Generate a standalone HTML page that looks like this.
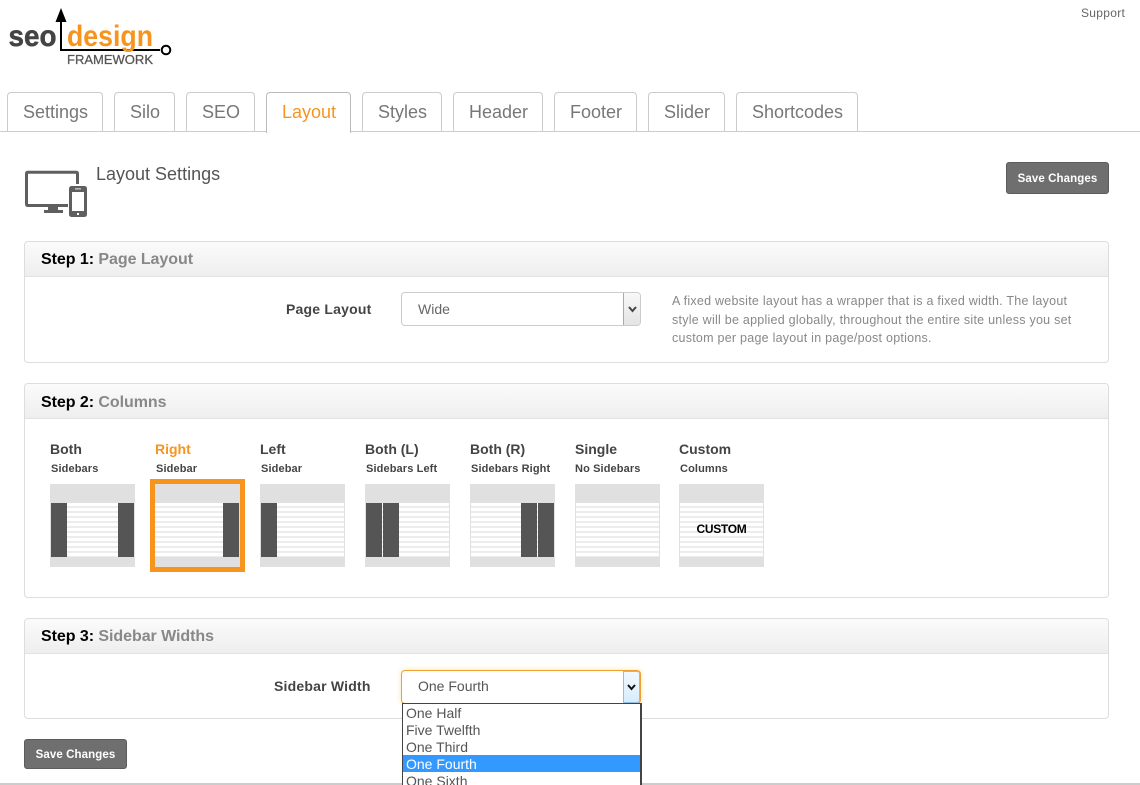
<!DOCTYPE html>
<html><head><meta charset="utf-8"><style>
html,body{margin:0;padding:0;background:#fff;width:1140px;height:785px;overflow:hidden}
body{position:relative;font-family:"Liberation Sans",sans-serif;color:#555}
.a{position:absolute;white-space:nowrap}
.tab{position:absolute;top:92px;height:38px;border:1px solid #ccc;border-bottom:none;border-radius:4px 4px 0 0;box-sizing:content-box;font-size:18px;line-height:39px;text-align:center;text-indent:1px;color:#777;background:#fff}
.tab.on{color:#f7941d;height:40px;z-index:2;border-color:#bbb}
.panel{position:absolute;left:24px;width:1083px;border:1px solid #ddd;border-radius:4px;background:#fff}
.head{height:34px;background:linear-gradient(#fbfbfb,#eee);border-bottom:1px solid #e2e2e2;border-radius:4px 4px 0 0;font-size:16px;font-weight:bold;line-height:35px;padding-left:16px;color:#888;letter-spacing:-.05px}
.head b{color:#000}
.lbl{position:absolute;font-size:14px;font-weight:bold;color:#444;letter-spacing:.2px;white-space:nowrap}
.sel{position:absolute;left:401px;width:238px;height:32px;border:1px solid #ccc;border-radius:4px;background:#fff;font-size:14px;line-height:32px;color:#666;text-indent:16px}
.sel i{position:absolute;right:0;top:0;width:16px;height:32px;background:linear-gradient(#f8f8f8,#e4e4e4);border-left:1px solid #aaa;border-radius:0 3px 3px 0}
.sel svg{position:absolute;left:4px;top:13px}
.btn{position:absolute;background:#6f6f6f;border:1px solid #5c5c5c;border-radius:3px;color:#fff;font-size:11.5px;font-weight:bold;text-align:center;box-sizing:border-box;letter-spacing:.1px}
.t1{position:absolute;top:441px;font-size:14px;font-weight:bold;color:#444;white-space:nowrap}
.t2{position:absolute;top:463px;font-size:11px;font-weight:bold;color:#444;white-space:nowrap;letter-spacing:.12px}
.th{position:absolute;top:484px;width:85px;height:83px;background:#e0e0e0}
.th .c{position:absolute;left:1px;right:1px;top:19px;height:54px;background:repeating-linear-gradient(#fff 0 3px,#ececec 3px 5px)}
.th s{position:absolute;top:19px;height:54px;width:16px;background:#555;display:block}
.opt{height:17px;line-height:19px;padding-left:3px;font-size:14px;color:#555}
</style></head><body>

<svg class="a" style="left:0;top:0" width="180" height="70">
<path d="M61 22V50H160" fill="none" stroke="#000" stroke-width="2"/>
<path d="M55.500 22L61 8L66.500 22Z" fill="#000"/>
<circle cx="166" cy="50" r="4.300" fill="#fff" stroke="#000" stroke-width="2"/>
<text x="8.500" y="46" font-family="Liberation Sans" font-weight="bold" font-size="30" fill="#444" stroke="#444" stroke-width=".5" textLength="48" lengthAdjust="spacingAndGlyphs">seo</text>
<text x="67" y="46" font-family="Liberation Sans" font-weight="bold" font-size="30" fill="#f7941d" textLength="86" lengthAdjust="spacingAndGlyphs">design</text>
<text x="67" y="64" font-family="Liberation Sans" font-size="12.500" fill="#555" stroke="#555" stroke-width=".25" textLength="86" lengthAdjust="spacingAndGlyphs">FRAMEWORK</text>
</svg>

<div class="a" style="left:1081px;top:6px;font-size:12px;color:#666;letter-spacing:.3px">Support</div>

<div class="a" style="left:0;top:131px;width:1140px;height:1px;background:#ccc"></div>
<div class="tab" style="left:7px;width:94px">Settings</div>
<div class="tab" style="left:114px;width:59px">Silo</div>
<div class="tab" style="left:186px;width:67px">SEO</div>
<div class="tab on" style="left:266px;width:83px">Layout</div>
<div class="tab" style="left:362px;width:78px">Styles</div>
<div class="tab" style="left:453px;width:88px">Header</div>
<div class="tab" style="left:554px;width:81px">Footer</div>
<div class="tab" style="left:648px;width:75px">Slider</div>
<div class="tab" style="left:736px;width:120px">Shortcodes</div>

<svg class="a" style="left:20px;top:165px" width="72" height="56">
<path d="M57.500 19V8.500Q57.500 7.200 56 7.200H8Q6.500 7.200 6.500 8.500V39Q6.500 40.500 8 40.500H48" fill="none" stroke="#5f5f5f" stroke-width="3"/>
<path d="M28 42H38V45H43V48H24V45H28Z" fill="#5f5f5f"/>
<rect x="49" y="21" width="18" height="31" rx="2.500" fill="#5f5f5f"/>
<rect x="52" y="27" width="12" height="19" fill="#fff"/>
<rect x="55" y="23.200" width="6" height="1.300" fill="#ccc"/>
<rect x="57" y="48" width="2" height="2" fill="#fff"/>
</svg>
<div class="a" style="left:96px;top:164px;font-size:18px;color:#555">Layout Settings</div>
<div class="btn" style="left:1006px;top:162px;width:103px;height:32px;line-height:32px">Save Changes</div>

<div class="panel" style="top:241px;height:120px"><div class="head"><b>Step 1:</b> Page Layout</div></div>
<div class="lbl" style="left:286px;top:301px">Page Layout</div>
<div class="sel" style="top:292px">Wide<i><svg width="9" height="7"><path d="M1 1L4.500 5L8 1" fill="none" stroke="#444" stroke-width="2"/></svg></i></div>
<div class="a" style="left:672px;top:292px;font-size:12.500px;line-height:18.500px;color:#888;letter-spacing:.25px">A fixed website layout has a wrapper that is a fixed width. The layout<br>style will be applied globally, throughout the entire site unless you set<br>custom per page layout in page/post options.</div>

<div class="panel" style="top:383px;height:213px"><div class="head" style="line-height:37px"><b>Step 2:</b> Columns</div></div>

<div class="t1" style="left:50px">Both</div><div class="t2" style="left:51px">Sidebars</div>
<div class="t1" style="left:155px;color:#f7941d">Right</div><div class="t2" style="left:156px">Sidebar</div>
<div class="t1" style="left:260px">Left</div><div class="t2" style="left:261px">Sidebar</div>
<div class="t1" style="left:365px">Both (L)</div><div class="t2" style="left:366px">Sidebars Left</div>
<div class="t1" style="left:470px">Both (R)</div><div class="t2" style="left:471px">Sidebars Right</div>
<div class="t1" style="left:575px">Single</div><div class="t2" style="left:575px">No Sidebars</div>
<div class="t1" style="left:679px">Custom</div><div class="t2" style="left:680px">Columns</div>

<div class="th" style="left:50px"><div class="c"></div><s style="left:1px"></s><s style="left:68px"></s></div>
<div class="a" style="left:150px;top:479px;width:85px;height:83px;border:5px solid #f7941d;background:#e0e0e0"><div style="position:absolute;left:0;top:19px;width:84px;height:54px;background:repeating-linear-gradient(#fff 0 3px,#ececec 3px 5px)"></div><s style="position:absolute;display:block;left:68px;top:19px;width:16px;height:54px;background:#555"></s></div>
<div class="th" style="left:260px"><div class="c"></div><s style="left:1px"></s></div>
<div class="th" style="left:365px"><div class="c"></div><s style="left:1px"></s><s style="left:18px"></s></div>
<div class="th" style="left:470px"><div class="c"></div><s style="left:51px"></s><s style="left:68px"></s></div>
<div class="th" style="left:575px"><div class="c"></div></div>
<div class="th" style="left:679px"><div class="c"></div><div class="a" style="left:0;width:85px;text-align:center;top:38px;font-size:12px;font-weight:bold;color:#000;letter-spacing:-.3px">CUSTOM</div></div>

<div class="panel" style="top:618px;height:99px"><div class="head"><b>Step 3:</b> Sidebar Widths</div></div>
<div class="lbl" style="left:274px;top:678px">Sidebar Width</div>
<div class="sel" style="top:670px;height:32px;line-height:30px;border-color:#f0a030;box-shadow:0 0 6px #fce3b0;color:#555">One Fourth<i style="background:linear-gradient(#f2f9ff,#d8ecfc);border:1px solid #8fbfe6;height:30px;width:15px"><svg width="9" height="7" style="top:12px;left:3px"><path d="M1 1L4.500 5L8 1" fill="none" stroke="#111" stroke-width="2"/></svg></i></div>

<div class="a" style="left:402px;top:703px;width:237px;height:82px;border:1px solid #444;border-bottom:none;border-right-width:2px;background:#fff;overflow:hidden;z-index:3">
<div class="opt">One Half</div><div class="opt">Five Twelfth</div><div class="opt">One Third</div>
<div class="opt" style="background:#3399ff;color:#fff">One Fourth</div><div class="opt">One Sixth</div>
</div>

<div class="btn" style="left:24px;top:739px;width:103px;height:30px;line-height:30px">Save Changes</div>
<div class="a" style="left:0;top:783px;width:1140px;height:2px;background:#ccc"></div>
</body></html>
